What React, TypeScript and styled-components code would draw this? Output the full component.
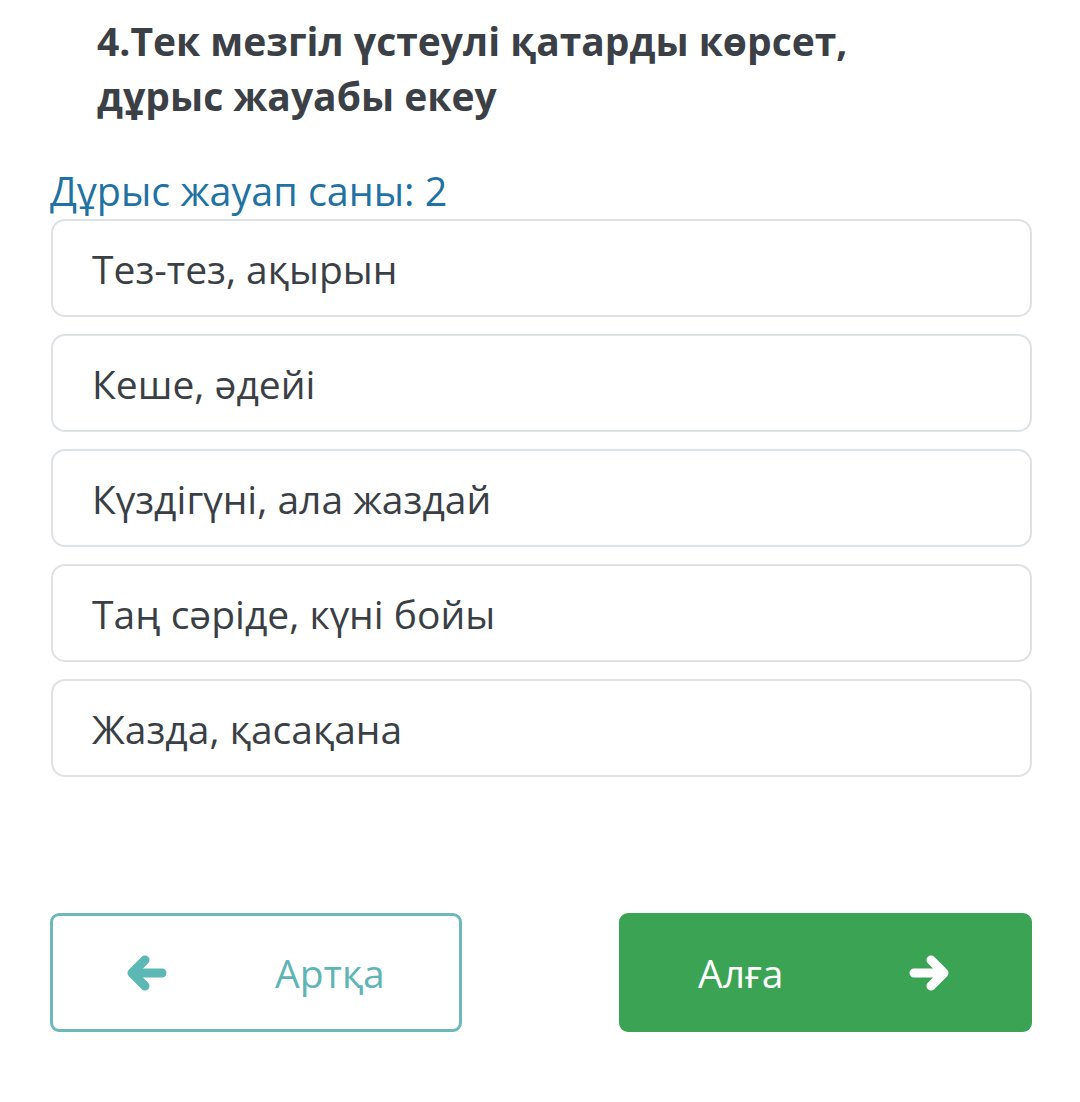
import React from "react";
import styled, { createGlobalStyle } from "styled-components";

const Global = createGlobalStyle`
  html, body { margin: 0; padding: 0; background: #ffffff; }
  body { font-family: "Open Sans", "Noto Sans", sans-serif; }
`;

const Page = styled.div`
  width: 1080px;
  height: 1102px;
  box-sizing: border-box;
  padding: 13px 48px 0 50px;
  display: flex;
  flex-direction: column;
`;

const Title = styled.h1`
  margin: 0 0 0 47px;
  font-size: 39px;
  font-weight: 700;
  line-height: 55px;
  color: #3b4047;
`;

const Count = styled.div`
  margin-top: 46px;
  font-size: 39.5px;
  line-height: 44px;
  color: #1f72a3;
`;

const List = styled.div`
  display: flex;
  flex-direction: column;
  gap: 17px;
  margin-top: 6px;
`;

const Option = styled.div`
  height: 98px;
  box-sizing: border-box;
  border: 2px solid #dfe2e5;
  border-radius: 14px;
  background: #fff;
  display: flex;
  align-items: center;
  padding-left: 39px;
  font-size: 39px;
  color: #3a3f45;
  margin-left: 1px;
`;

const Nav = styled.div`
  display: flex;
  justify-content: space-between;
  margin-top: 136px;
`;

const NavButton = styled.button<{ $primary?: boolean }>`
  width: ${(p) => (p.$primary ? "413px" : "412px")};
  height: 119px;
  box-sizing: border-box;
  border-radius: 9px;
  border: ${(p) => (p.$primary ? "none" : "3px solid #6db8bb")};
  background: ${(p) => (p.$primary ? "#3ba454" : "#fff")};
  color: ${(p) => (p.$primary ? "#fff" : "#5fb5b5")};
  font-family: "Open Sans", "Noto Sans", sans-serif;
  font-size: 39px;
  display: flex;
  align-items: center;
  padding: 0;
`;

const BackIcon = styled.span`
  margin-left: 74px;
  display: flex;
`;

const BackLabel = styled.span`
  margin-left: 108px;
`;

const NextLabel = styled.span`
  margin-left: 79px;
`;

const NextIcon = styled.span`
  margin-left: auto;
  margin-right: 83px;
  display: flex;
`;

const Arrow = ({ dir, color }: { dir: "left" | "right"; color: string }) => (
  <svg width="40" height="36" viewBox="0 0 40 36">
    <g transform={dir === "left" ? "" : "translate(40,0) scale(-1,1)"}>
      <path
        d="M18 5 L5 18 L18 31 M6 18 L35 18"
        fill="none"
        stroke={color}
        strokeWidth="9"
        strokeLinecap="round"
        strokeLinejoin="round"
      />
    </g>
  </svg>
);

const options = [
  "Тез-тез, ақырын",
  "Кеше, әдейі",
  "Күздігүні, ала жаздай",
  "Таң сәріде, күні бойы",
  "Жазда, қасақана",
];

export default function App() {
  return (
    <>
      <Global />
      <Page>
        <Title>
          4.Тек мезгіл үстеулі қатарды көрсет,
          <br />
          дұрыс жауабы екеу
        </Title>
        <Count>Дұрыс жауап саны: 2</Count>
        <List>
          {options.map((o) => (
            <Option key={o}>{o}</Option>
          ))}
        </List>
        <Nav>
          <NavButton>
            <BackIcon>
              <Arrow dir="left" color="#5bb8b5" />
            </BackIcon>
            <BackLabel>Артқа</BackLabel>
          </NavButton>
          <NavButton $primary>
            <NextLabel>Алға</NextLabel>
            <NextIcon>
              <Arrow dir="right" color="#ffffff" />
            </NextIcon>
          </NavButton>
        </Nav>
      </Page>
    </>
  );
}
